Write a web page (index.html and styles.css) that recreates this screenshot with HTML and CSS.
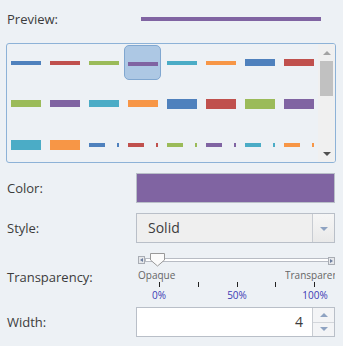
FILE: index.html
```html
<!DOCTYPE html>
<html lang="en">
<head>
    <meta charset="UTF-8">
    <meta name="viewport" content="width=device-width, initial-scale=1.0">
    <title>Line Symbol</title>
    <link rel="stylesheet" href="styles.css">
</head>
<body>
    <div class="panel">
        <div class="preview-row">
            <span class="label">Preview:</span>
            <div class="preview-line"></div>
        </div>

        <div class="symbol-box">
            <div class="symbol-grid">
                <div class="cell"><div class="line blue"></div></div>
                <div class="cell"><div class="line red"></div></div>
                <div class="cell"><div class="line green"></div></div>
                <div class="cell selected"><div class="line purple"></div></div>
                <div class="cell"><div class="line teal"></div></div>
                <div class="cell"><div class="line orange"></div></div>
                <div class="cell"><div class="line w7 blue"></div></div>
                <div class="cell"><div class="line w7 red"></div></div>

                <div class="cell"><div class="line w7 green"></div></div>
                <div class="cell"><div class="line w7 purple"></div></div>
                <div class="cell"><div class="line w7 teal"></div></div>
                <div class="cell"><div class="line w7 orange"></div></div>
                <div class="cell"><div class="line w10 blue"></div></div>
                <div class="cell"><div class="line w10 red"></div></div>
                <div class="cell"><div class="line w10 green"></div></div>
                <div class="cell"><div class="line w10 purple"></div></div>

                <div class="cell"><div class="line w10 teal"></div></div>
                <div class="cell"><div class="line w10 orange"></div></div>
                <div class="cell"><div class="line dashdot blue"></div></div>
                <div class="cell"><div class="line dashdot red"></div></div>
                <div class="cell"><div class="line dashdot green"></div></div>
                <div class="cell"><div class="line dashdot purple"></div></div>
                <div class="cell"><div class="line dashdot teal"></div></div>
                <div class="cell"><div class="line dashdot orange"></div></div>
            </div>
            <div class="scrollbar">
                <div class="scroll-btn"><span class="arrow-up"></span></div>
                <div class="scroll-track"><div class="scroll-thumb"></div></div>
                <div class="scroll-btn"><span class="arrow-down"></span></div>
            </div>
        </div>

        <div class="field">
            <span class="label">Color:</span>
            <div class="color-swatch"></div>
        </div>

        <div class="field field-style">
            <span class="label">Style:</span>
            <div class="select">
                <span class="select-text">Solid</span>
                <span class="select-btn"><span class="caret"></span></span>
            </div>
        </div>

        <div class="field field-slider">
            <span class="label">Transparency:</span>
            <div class="slider">
                <div class="slider-bar">
                    <span class="slider-step left"></span>
                    <span class="slider-rail"></span>
                    <span class="slider-step right"></span>
                    <svg class="slider-handle" width="17" height="14" viewBox="0 0 17 14">
                        <path d="M1.5 0.5 H15.5 V7 L8.5 13 L1.5 7 Z" fill="#fbfbfb" stroke="#999"/>
                    </svg>
                </div>
                <div class="scale-ends">
                    <span>Opaque</span>
                    <span class="end-right">Transparent</span>
                </div>
                <div class="ticks">
                    <i></i><i></i><i></i><i></i><i></i>
                </div>
                <div class="scale-pcts">
                    <span>0%</span><span>50%</span><span>100%</span>
                </div>
            </div>
        </div>

        <div class="field field-width">
            <span class="label">Width:</span>
            <div class="spinner">
                <span class="spinner-value">4</span>
                <span class="spinner-btns">
                    <span class="spin-up"><span class="caret up"></span></span>
                    <span class="spin-down"><span class="caret"></span></span>
                </span>
            </div>
        </div>
    </div>
</body>
</html>
```

FILE: styles.css
```css
body {
    margin: 0;
    background: #edf1f5;
    font-family: "Open Sans", Arial, sans-serif;
    color: #3c3c3c;
    overflow: hidden;
}
.panel {
    width: 328px;
    padding: 0 0 0 7px;
}
.label {
    font-size: 13px;
}

/* preview */
.preview-row {
    height: 38px;
    display: flex;
    align-items: center;
}
.preview-row .label {
    width: 134px;
}
.preview-line {
    width: 180px;
    height: 4px;
    margin-top: -1px;
    background: #8064a2;
}

/* symbol picker */
.symbol-box {
    margin: 5px 0 0 -1px;
    width: 328px;
    height: 118px;
    border: 1px solid #8db2d7;
    border-radius: 3px;
    display: flex;
    overflow: hidden;
}
.symbol-grid {
    width: 311px;
    display: flex;
    flex-wrap: wrap;
    align-content: flex-start;
    gap: 6px 2px;
    padding-top: 1px;
}
.cell {
    width: 37px;
    height: 35px;
    box-sizing: border-box;
    display: flex;
    align-items: center;
    justify-content: center;
    border-radius: 5px;
}
.cell.selected {
    background: #adc8e4;
    border: 1px solid #80a7d0;
    padding-top: 2px;
}
.line {
    width: 30px;
    height: 4px;
    background: currentColor;
}
.line.w7 { height: 7px; }
.line.w10 { height: 10px; }
.line.dashdot {
    background: linear-gradient(to right, currentColor 0 16px, transparent 16px 28px, currentColor 28px 30px);
}
.blue { color: #4f81bd; }
.red { color: #c0504d; }
.green { color: #9bbb59; }
.purple { color: #8064a2; }
.teal { color: #4bacc6; }
.orange { color: #f79646; }

.scrollbar {
    width: 17px;
    background: #f0f0f0;
    display: flex;
    flex-direction: column;
}
.scroll-btn {
    height: 17px;
    display: flex;
    align-items: center;
    justify-content: center;
}
.scroll-track {
    flex: 1;
    padding: 0 2px;
}
.scroll-thumb {
    height: 35px;
    background: #c1c1c1;
}
.arrow-up {
    border: 4px solid transparent;
    border-top: 0;
    border-bottom: 4px solid #a3a3a3;
}
.arrow-down {
    border: 4px solid transparent;
    border-bottom: 0;
    border-top: 4px solid #505050;
}

/* form rows */
.field {
    display: grid;
    grid-template-columns: 129px 199px;
    align-items: center;
    margin-top: 10px;
}
.color-swatch {
    height: 30px;
    box-sizing: border-box;
    border: 1px solid #b9bfc8;
    background: #8064a2;
}
.select, .spinner {
    height: 30px;
    box-sizing: border-box;
    border: 1px solid #b9bfc8;
    display: flex;
    font-size: 14px;
}
.select {
    background: #efefef;
}
.select-text {
    flex: 1;
    padding-left: 11px;
    line-height: 27px;
}
.select-btn {
    width: 21px;
    border-left: 1px solid #c8ccd2;
    background: linear-gradient(#f6f6f6, #e9e9e9);
    display: flex;
    align-items: center;
    justify-content: center;
    padding-top: 2px;
}
.caret {
    border: 4px solid transparent;
    border-bottom: 0;
    border-top: 4px solid #8fa3c2;
}
.caret.up {
    border-top: 0;
    border-bottom: 4px solid #8fa3c2;
}

/* transparency slider */
.field-slider {
    margin-top: 9px;
}
.slider {
    font-size: 10px;
}
.slider-bar {
    position: relative;
    height: 15px;
    display: flex;
    align-items: center;
    padding-left: 2px;
}
.slider-step {
    width: 5px;
    height: 6px;
    border: 1px solid #a9adb4;
    background: #e6e8eb;
    position: relative;
}
.slider-step.right {
    margin-top: 2px;
}
.slider-step::after {
    content: "";
    position: absolute;
    top: 1px;
    left: 1px;
    border: 2px solid transparent;
    border-left: 0;
    border-right: 3px solid #6d7fa0;
}
.slider-step.right::after {
    border-right: 0;
    border-left: 3px solid #6d7fa0;
}
.slider-rail {
    flex: 1;
    height: 2px;
    border: 1px solid #b8bcc4;
    background: #fff;
    margin-right: -1px;
}
.slider-handle {
    position: absolute;
    left: 13px;
    top: 1px;
}
.scale-ends {
    display: grid;
    grid-template-columns: 1fr 50px;
    line-height: 12px;
    margin-top: 2px;
    color: #666;
    padding-left: 2px;
}
.end-right {
    white-space: nowrap;
    overflow: hidden;
}
.ticks {
    width: 156px;
    height: 5px;
    margin: 1px 0 0 23px;
    display: flex;
    justify-content: space-between;
}
.ticks i {
    width: 1px;
    background: #222;
}
.scale-pcts {
    display: grid;
    grid-template-columns: repeat(3, 40px);
    column-gap: 38px;
    margin: 2px 0 0 3px;
    line-height: 12px;
    text-align: center;
    color: #3a3ab4;
}

/* width spinner */
.field-width {
    margin-top: 6px;
}
.spinner {
    background: #fff;
}
.spinner-value {
    flex: 1;
    text-align: right;
    padding-right: 9px;
    line-height: 28px;
}
.spinner-btns {
    width: 21px;
    border-left: 1px solid #c8ccd2;
    display: flex;
    flex-direction: column;
    background: #f3f4f6;
}
.spin-up, .spin-down {
    flex: 1;
    display: flex;
    align-items: center;
    justify-content: center;
}
.spin-up {
    border-bottom: 1px solid #d3d6db;
}
```
